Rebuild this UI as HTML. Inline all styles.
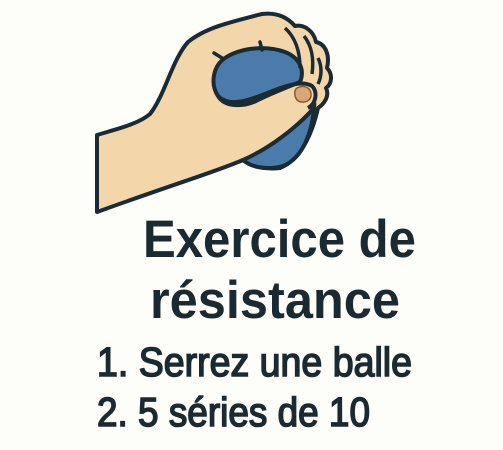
<!DOCTYPE html>
<html><head><meta charset="utf-8"><style>
html,body{margin:0;padding:0;background:#fdfdfa;width:503px;height:450px;overflow:hidden}
svg{display:block}
</style></head><body>
<svg width="503" height="450" viewBox="0 0 503 450" xmlns="http://www.w3.org/2000/svg">
<rect width="503" height="450" fill="#fdfdfa"/>
<path d="M97,135 C120,128 138,124 150,114 C165,95 172,60 188,42 C205,28 230,22 262,14 C278,12 288,18 295,26 C305,24 314,32 316,42 C326,44 330,56 327,68 C333,74 332,84 326,88 C330,96 324,104 318,108 C312,135 300,160 280,168 C265,170 250,166 243,160 C215,172 180,182 97,212 Z" fill="#f4d6ab" stroke="#1b2b33" stroke-width="4" stroke-linejoin="round"/>
<path d="M225,58 C240,48 265,45 285,52 C300,58 305,70 300,82 C285,88 270,94 258,100 C245,107 225,108 218,96 C210,84 213,66 225,58 Z" fill="#4a7bab" stroke="#1b2b33" stroke-width="4"/>
<path d="M314,108 C312,132 303,158 283,166 C268,170 252,168 243,160 C270,148 296,128 314,108 Z" fill="#4a7bab" stroke="#1b2b33" stroke-width="4"/>
<path d="M218,96 C230,108 250,100 270,92 C285,86 302,80 312,86 C318,92 316,104 308,108" fill="none" stroke="#1b2b33" stroke-width="4"/>
<path d="M297,88 C304,84 312,88 311,96 C310,102 302,104 297,100 C294,96 294,90 297,88 Z" fill="#d8a877" stroke="#8a5a35" stroke-width="1.5"/>
<path d="M285,28 C296,38 300,52 300,68" fill="none" stroke="#1b2b33" stroke-width="3.5"/>
<path d="M304,36 C312,46 314,60 312,74" fill="none" stroke="#1b2b33" stroke-width="3.5"/>
<path d="M318,58 C322,66 322,76 318,84" fill="none" stroke="#1b2b33" stroke-width="3.5"/>
<path d="M260,42 L262,50 M222,58 L214,53" stroke="#1b2b33" stroke-width="3.5" stroke-linecap="round"/>
<g font-family="'Liberation Sans', sans-serif" fill="#1a2a30">
<text x="143" y="257" font-size="53" font-weight="bold" textLength="273" lengthAdjust="spacingAndGlyphs">Exercice de</text>
<text x="150" y="318" font-size="53" font-weight="bold" textLength="250" lengthAdjust="spacingAndGlyphs">résistance</text>
<text x="97" y="376" font-size="41" textLength="315" lengthAdjust="spacingAndGlyphs" stroke="#1a2a30" stroke-width="1.6">1. Serrez une balle</text>
<text x="97" y="426" font-size="41" textLength="273" lengthAdjust="spacingAndGlyphs" stroke="#1a2a30" stroke-width="1.6">2. 5 séries de 10</text>
</g>
</svg>
</body></html>
